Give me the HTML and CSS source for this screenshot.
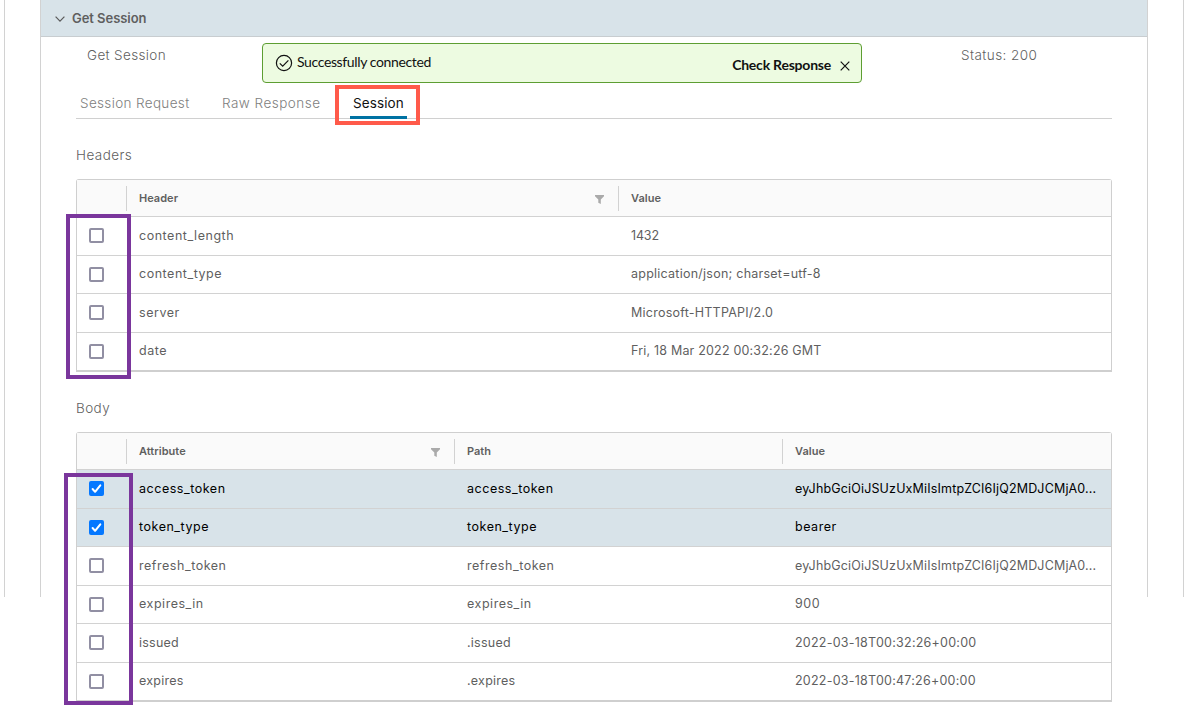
FILE: index.html
```html
<!DOCTYPE html>
<html lang="en">
<head>
<meta charset="utf-8">
<title>Get Session</title>
<link rel="stylesheet" href="styles.css">
</head>
<body>
<main class="frame">
  <section class="panel">
    <header class="panel-header">
      <svg class="caret" width="10" height="6" viewBox="0 0 10 6"><path d="M.6.6 5 5.1 9.4.6"/></svg>
      <h1 class="panel-title">Get Session</h1>
    </header>
    <div class="summary">
      <span class="summary-name">Get Session</span>
      <div class="alert">
        <svg class="alert-icon" width="18" height="18" viewBox="0 0 18 18"><circle cx="9" cy="9" r="7.6"/><path d="m4.8 9.3 2.9 2.9 5.7-5.8"/></svg>
        <span class="alert-text">Successfully connected</span>
        <span class="alert-action">Check Response</span>
        <svg class="alert-close" width="10" height="10" viewBox="0 0 10 10"><path d="m.7.7 8.6 8.6M9.3.7.7 9.3"/></svg>
      </div>
      <span class="summary-status">Status: 200</span>
    </div>
    <nav class="tabs">
      <span class="tab tab-request">Session Request</span>
      <span class="tab tab-raw">Raw Response</span>
      <span class="tab tab-active">Session<i class="mark mark-tab"></i></span>
    </nav>

    <h2 class="section-title">Headers</h2>
    <div class="grid grid-headers">
      <div class="row row-head">
        <span class="cell"></span>
        <span class="cell">Header<svg class="filter" width="9" height="9" viewBox="0 0 9 9"><path d="M0 0h9v1.2L5.8 4.5V9L3.3 7.8V4.5L0 1.2z"/></svg></span>
        <span class="cell">Value</span>
      </div>
      <div class="row"><span class="cell"><i class="box"></i></span><span class="cell key">content_length</span><span class="cell number">1432</span></div>
      <div class="row"><span class="cell"><i class="box"></i></span><span class="cell key">content_type</span><span class="cell">application/json; charset=utf-8</span></div>
      <div class="row"><span class="cell"><i class="box"></i></span><span class="cell key">server</span><span class="cell">Microsoft-HTTPAPI/2.0</span></div>
      <div class="row"><span class="cell"><i class="box"></i></span><span class="cell key">date</span><span class="cell date">Fri, 18 Mar 2022 00:32:26 GMT</span></div>
      <i class="mark mark-headers"></i>
    </div>

    <h2 class="section-title">Body</h2>
    <div class="grid grid-body">
      <div class="row row-head">
        <span class="cell"></span>
        <span class="cell">Attribute<svg class="filter" width="9" height="9" viewBox="0 0 9 9"><path d="M0 0h9v1.2L5.8 4.5V9L3.3 7.8V4.5L0 1.2z"/></svg></span>
        <span class="cell">Path</span>
        <span class="cell">Value</span>
      </div>
      <div class="row selected"><span class="cell"><i class="box checked"><svg width="15" height="15" viewBox="0 0 15 15"><path d="m3.6 8 2.5 2.8 5.2-6.5"/></svg></i></span><span class="cell key">access_token</span><span class="cell key">access_token</span><span class="cell token">eyJhbGciOiJSUzUxMiIsImtpZCI6IjQ2MDJCMjA0...</span></div>
      <div class="row selected"><span class="cell"><i class="box checked"><svg width="15" height="15" viewBox="0 0 15 15"><path d="m3.6 8 2.5 2.8 5.2-6.5"/></svg></i></span><span class="cell key">token_type</span><span class="cell key">token_type</span><span class="cell key">bearer</span></div>
      <div class="row"><span class="cell"><i class="box"></i></span><span class="cell key">refresh_token</span><span class="cell key">refresh_token</span><span class="cell token">eyJhbGciOiJSUzUxMiIsImtpZCI6IjQ2MDJCMjA0...</span></div>
      <div class="row"><span class="cell"><i class="box"></i></span><span class="cell key">expires_in</span><span class="cell key">expires_in</span><span class="cell key">900</span></div>
      <div class="row"><span class="cell"><i class="box"></i></span><span class="cell">issued</span><span class="cell">.issued</span><span class="cell">2022-03-18T00:32:26+00:00</span></div>
      <div class="row"><span class="cell"><i class="box"></i></span><span class="cell">expires</span><span class="cell">.expires</span><span class="cell">2022-03-18T00:47:26+00:00</span></div>
      <i class="mark mark-body"></i>
    </div>
  </section>
</main>
</body>
</html>
```

FILE: styles.css
```css
* { box-sizing: border-box; }
body {
  margin: 0;
  height: 707px;
  overflow: hidden;
  background: #fff;
  color: #5f5f5f;
  font: 12.5px/20px Inter, "Open Sans", sans-serif;
}
svg { fill: none; stroke: currentColor; flex: none; }
.frame {
  width: 1180px;
  height: 597px;
  margin-left: 4px;
  padding: 0 35px;
  border: solid #d2d2d2;
  border-width: 0 1px;
}
.panel {
  height: 597px;
  border: solid #d2d2d2;
  border-width: 0 1px;
}
.panel-header {
  display: flex;
  align-items: center;
  height: 37px;
  padding-left: 14px;
  background: #d8e3e9;
  border-bottom: 1px solid #c8cdd0;
}
.caret { stroke: #5a5a5a; stroke-width: 1.2; margin-top: 1px; }
.panel-title { margin: 0 0 0 7px; font-size: 13px; font-weight: 600; letter-spacing: -.05px; }

.summary { display: flex; height: 50px; padding: 6px 35px 0 46px; }
.summary-name { width: 175px; margin-top: 2px; font-size: 13.5px; font-weight: 350; letter-spacing: .35px; }
.alert {
  display: flex;
  width: 600px;
  height: 40px;
  padding: 0 12px;
  color: #111;
  background: #edfbe1;
  border: 1px solid #5d9e32;
  border-radius: 4px;
}
.alert-icon { margin-top: 10px; stroke-width: 1.2; }
.alert-text { margin: 8px 0 0 4px; font: 14px/20px Lato, sans-serif; letter-spacing: -.37px; }
.alert-action { margin: 11px 9px 0 auto; font: 700 14px/20px Lato, sans-serif; letter-spacing: -.22px; }
.alert-close { margin-top: 17px; margin-right: -1px; stroke-width: 1.2; }
.summary-status { margin: 2px 0 0 99px; font-size: 13.5px; font-weight: 350; letter-spacing: .42px; }

.tabs {
  display: flex;
  height: 32px;
  margin: 0 35px;
  border-bottom: 1px solid #d0d0d0;
  font-size: 13.5px;
  font-weight: 350;
  color: #808080;
}
.tab { padding-top: 6px; }
.tab-request { width: 142px; padding-left: 4px; letter-spacing: .35px; }
.tab-raw { width: 132px; padding-left: 4px; letter-spacing: .48px; }
.tab-active {
  position: relative;
  width: 57px;
  padding-left: 3px;
  color: #111;
  font-weight: 400;
  letter-spacing: .1px;
  border-bottom: 3px solid #0072a3;
  margin-bottom: -1px;
}
.mark { position: absolute; border: 4px solid #7a369c; pointer-events: none; }
.mark-tab { left: -15px; top: -2px; width: 85px; height: 40px; border-color: #ff5a4a; }
.mark-headers { left: -11px; top: 34px; width: 65px; height: 165px; }
.mark-body { left: -13px; top: 40px; width: 69px; height: 232px; }

.section-title { margin: 0 35px; padding-top: 26px; height: 60px; font-size: 13.5px; font-weight: 350; line-height: 20px; letter-spacing: .42px; }
.grid {
  position: relative;
  margin: 0 35px;
  border: 1px solid #cfcfcf;
  border-bottom-width: 2px;
  border-radius: 3px 3px 0 0;
}
.grid-headers { height: 193px; }
.grid-body { height: 270px; }
.row { display: grid; height: 38.5px; border-top: 1px solid #d2d2d2; letter-spacing: .24px; }
.grid-headers .row { grid-template-columns: 50px 492px 1fr; }
.grid-body .row { grid-template-columns: 50px 328px 328px 1fr; }
.grid .row-head { height: 36px; border-top: 0; background: #fafafa; font-size: 11px; font-weight: 600; letter-spacing: .03px; }
.grid-headers .row-head { grid-template-columns: 49px 492px 1fr; }
.grid-body .row-head { grid-template-columns: 49px 328px 328px 1fr; }
.cell { display: flex; align-items: center; padding: 0 14px 0 12px; white-space: nowrap; }
.row-head .cell { margin: 6px 0 5px; padding-bottom: 1px; }
.row-head .cell + .cell { border-left: 1px solid #d2d2d2; }
.key { letter-spacing: .53px; }
.number { letter-spacing: -.15px; }
.date { letter-spacing: .19px; }
.token { letter-spacing: .16px; }
.filter { margin-left: auto; margin-top: 3px; fill: #aaa; stroke: none; }
.box { width: 15px; height: 15px; border: 2px solid #918fa3; border-radius: 2px; background: #fff; }
.selected { background: #d8e3e9; color: #000; }
.checked { border: 0; background: #0578ff; color: #fff; }
.checked svg { display: block; stroke-width: 2; stroke-linecap: round; stroke-linejoin: round; }
```
